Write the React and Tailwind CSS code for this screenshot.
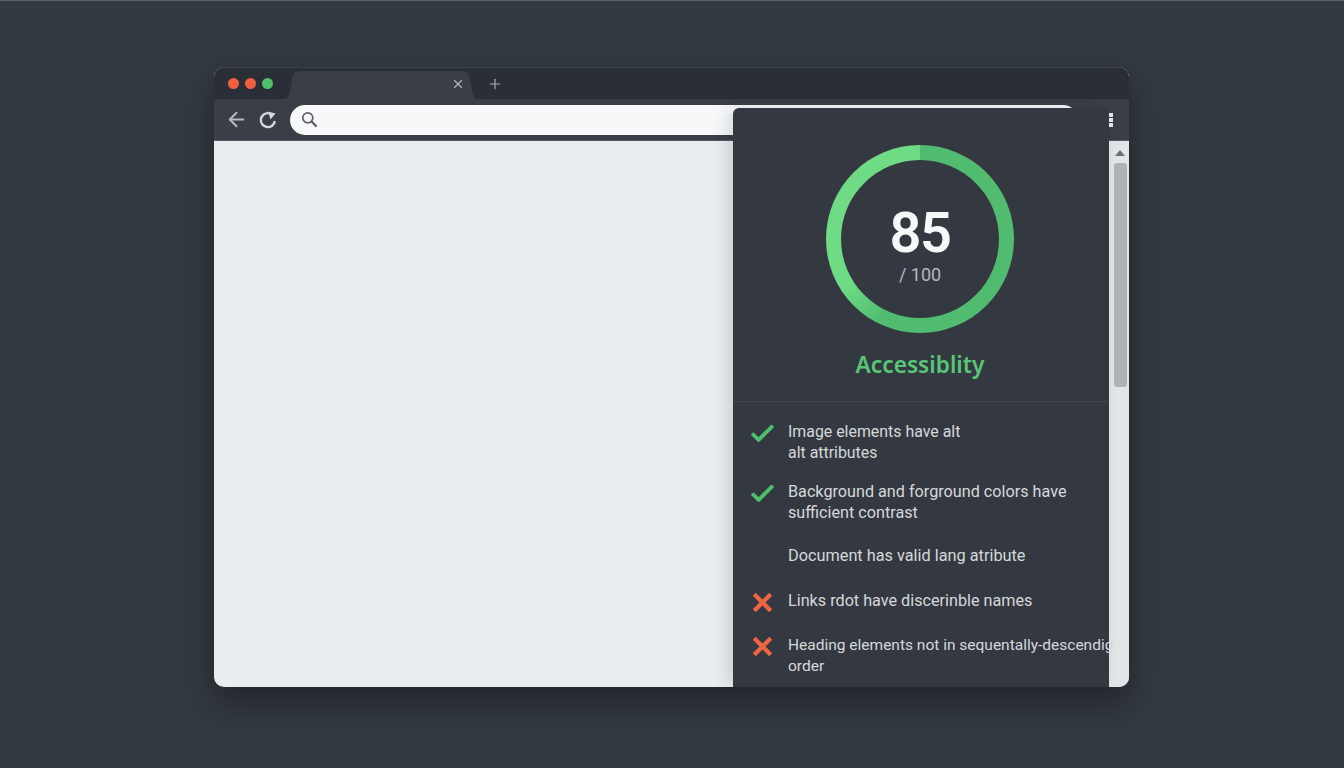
import React from "react";
import { ArrowLeft, Check, Plus, X } from "lucide-react";

const audits = [
  { status: "pass", lines: ["Image elements have alt", "alt attributes"], cls: "h-[60px] pt-[13px]", textCls: "text-[15.9px]" },
  { status: "pass", lines: ["Background and forground colors have", "sufficient contrast"], cls: "h-[62px] pt-[13px]", textCls: "text-[16.2px]" },
  { status: "none", lines: ["Document has valid lang atribute"], cls: "h-[46px] pt-[15px]", textCls: "text-[16.3px]" },
  { status: "fail", lines: ["Links rdot have discerinble names"], cls: "h-[42px] pt-[14px]", textCls: "text-[16.2px]" },
  { status: "fail", lines: ["Heading elements not in sequentally-descendig", "order"], cls: "h-[60px] pt-[16px]", textCls: "text-[15.5px]" },
];

const AuditRow = ({ status, lines, cls, textCls }) => {
  return (
    <div className={`flex items-start gap-[13px] pl-[17px] ${cls}`}>
      <div className="w-[25px] h-[22px] flex items-center justify-center shrink-0">
        {status === "pass" && <Check size={31} strokeWidth={3} strokeLinecap="butt" className="shrink-0 text-[#4cc06c]" />}
        {status === "fail" && <X size={33} strokeWidth={3} strokeLinecap="butt" className="shrink-0 text-[#ee6543]" />}
      </div>
      <div className={`${textCls} leading-[20.5px] text-[#d5d8db] whitespace-nowrap`}>
        {lines.map((line) => (
          <div key={line}>{line}</div>
        ))}
      </div>
    </div>
  );
};

const ScorePanel = () => {
  return (
    <div className="absolute z-10 left-[519px] top-[41px] bottom-0 w-[376px] bg-[#343941] rounded-t-[6px] shadow-[-6px_0_16px_rgba(0,0,0,0.12)] flex flex-col">
      <div className="h-[294px] shrink-0 flex flex-col items-center pt-[37px] pr-[2px] border-b border-[#41464d]">
        <div className="w-[188px] h-[188px] rounded-full flex items-center justify-center bg-[conic-gradient(#51bc70_0deg,#51bc70_205deg,#6fdc85_238deg,#6fdc85_360deg)]">
          <div className="w-[158px] h-[158px] rounded-full bg-[#343941] flex flex-col items-center">
            <div className="mt-[44px] text-[56px] leading-[59px] font-semibold tracking-[-1.5px] text-[#f7f8f9]">85</div>
            <div className="text-[18px] leading-[24px] text-[#b5b8bb]">/ 100</div>
          </div>
        </div>
        <div className="mt-[17px] text-[22.7px] leading-[30px] font-semibold text-[#58c677] font-['Noto_Sans',sans-serif]">Accessiblity</div>
      </div>
      <div className="flex-1 pt-[7px]">
        {audits.map((audit) => (
          <AuditRow key={audit.lines[0]} {...audit} />
        ))}
      </div>
    </div>
  );
};

const App = () => {
  return (
    <div className="w-[1344px] h-[768px] overflow-hidden bg-[#333941] border-t border-[#5d6269] pt-[66px] pl-[214px] font-['Roboto',sans-serif]">
      <div className="relative w-[915px] h-[620px] rounded-[10px] overflow-hidden flex flex-col bg-[#eaedef] shadow-[0_16px_32px_rgba(0,0,0,0.35)]">
        {/* tab strip */}
        <div className="h-[32px] shrink-0 bg-[#2a2f37] border-t border-[#3c424a] flex items-end pl-[14px]">
          <div className="h-[31px] flex items-center gap-[6px] pb-[1px]">
            <span className="w-[11px] h-[11px] rounded-full bg-[#ee6040]"></span>
            <span className="w-[11px] h-[11px] rounded-full bg-[#ee6040]"></span>
            <span className="w-[11px] h-[11px] rounded-full bg-[#4fc06c]"></span>
          </div>
          <div className="relative ml-[10px] w-[196px] h-[28px] flex items-center justify-end pr-[14px] pb-[2px]">
            <svg className="absolute inset-0" width="196" height="28" viewBox="0 0 196 28">
              <path d="M0 28C5 28 6 25 7 20L9 8C10 2 13 0 18 0L178 0C183 0 186 2 187 8L189 20C190 25 191 28 196 28Z" fill="#3a3f47" />
            </svg>
            <X size={14} strokeWidth={2} className="relative text-[#b4b7ba]" />
          </div>
          <div className="h-[31px] ml-[8px] flex items-center">
            <Plus size={16} strokeWidth={1.8} className="text-[#a8abaf]" />
          </div>
        </div>
        {/* toolbar */}
        <div className="h-[42px] shrink-0 bg-[#3a3f47] flex items-center pl-[11px] pr-[16px] border-b border-[#55595f]">
          <ArrowLeft size={23} strokeWidth={2} className="text-[#b8bbbe]" />
          <svg className="ml-[10px]" width="20" height="20" viewBox="0 0 20 20" fill="none">
            <path d="M16.8 11A7 7 0 1 1 11 3.2" stroke="#d5d7d9" strokeWidth="2.4" />
            <path d="M10 1.5L17.5 3.5L12.5 9.5Z" fill="#d5d7d9" />
          </svg>
          <div className="ml-[12px] flex-1 h-[30px] bg-[#f7f8fa] rounded-[15px] flex items-center pl-[11px]">
            <svg width="17" height="17" viewBox="0 0 17 17" fill="none">
              <circle cx="6.8" cy="6.8" r="5" stroke="#5d6268" strokeWidth="1.7" />
              <path d="M10.5 10.5L15.6 15.6" stroke="#5d6268" strokeWidth="2.2" />
            </svg>
          </div>
          <div className="ml-[30px] flex flex-col gap-[1px]">
            <span className="w-[5px] h-[4px] bg-[#e3e5e6]"></span>
            <span className="w-[5px] h-[4px] bg-[#e3e5e6]"></span>
            <span className="w-[5px] h-[4px] bg-[#e3e5e6]"></span>
          </div>
        </div>
        {/* page area */}
        <div className="flex-1 flex justify-end">
          <div className="w-[20px] bg-[#e2e5e7] flex flex-col items-center pt-[9px] pl-[1px]">
            <div className="w-0 h-0 border-x-[5px] border-x-transparent border-b-[6px] border-b-[#6b7075]"></div>
            <div className="mt-[7px] ml-[2px] w-[13px] h-[224px] rounded-[3px] bg-[#afb3b6]"></div>
          </div>
        </div>
        <ScorePanel />
      </div>
    </div>
  );
};

export default App;
